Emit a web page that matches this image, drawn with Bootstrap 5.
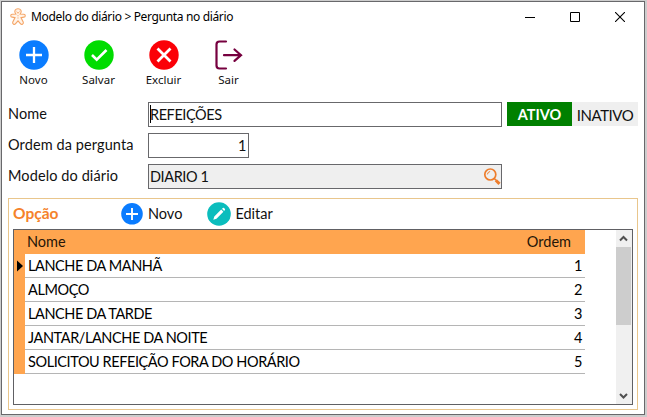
<!DOCTYPE html>
<html lang="pt-BR">
<head>
<meta charset="utf-8">
<meta name="viewport" content="width=device-width, initial-scale=1">
<title>Modelo do diário &gt; Pergunta no diário</title>
<link href="https://cdn.jsdelivr.net/npm/bootstrap@5.3.0/dist/css/bootstrap.min.css" rel="stylesheet">
<style>
body{font-family:Lato,"Open Sans",sans-serif;font-size:14.5px;line-height:20px;color:#111;background:#cdcdcd;padding:1px 2px 2px 1px;height:417px;overflow:hidden}
svg{display:block;flex:none}
.win{height:414px;border:1px solid #68686b;background:#fff}
.titlebar{height:29px;padding-left:8px;font-size:12px;font-family:"Noto Sans","Open Sans",sans-serif;color:#000}
.titlebar .caption-text{margin-left:5px;letter-spacing:-.34px}
.winbtns{margin-right:2px}
.winbtn{width:45px;height:29px}
.tools{height:71px;padding-top:9px;margin-left:-1px}
.tool{width:65px;font-family:"Noto Sans","Open Sans",sans-serif;font-size:11.5px;line-height:16px;color:#111}
.tool span{margin-top:2px}
.frow{height:31px;padding-left:6px}
.flabel{width:140px;padding-top:2px;letter-spacing:.1px}
.field{height:25px;border:1px solid #68686b;padding:0 2px 0 1px;letter-spacing:-.42px}
.lookup{padding-right:0}
.wide{width:354px}.short{width:101px}
.gray{background:#efefef}
.caret{width:1px;height:18px;background:#000;margin-right:-1px;margin-top:-2px}
.toggle{margin-left:5px;height:24px}
.toggle span{margin-top:2px}
.on{width:65px;background:#008000;color:#fff;font-weight:700;font-size:14.5px}
.off{width:66px;background:#efefef;font-size:15px;letter-spacing:-.45px}
.group{margin:3px 6px 0 6px;width:630px;height:212px;border:1px solid #e9c68c;padding:0 4px}
.ghead{height:30px}
.gtitle{width:108px;color:#f5822a;font-weight:700;font-size:15.5px;margin-top:-3px}
.lbl-new{margin-left:5px}
.ico-edit{margin-left:25px}
.gridbox{height:176px;border:1px solid #606064}
.cells{width:571px;color:#000}
.gh{height:24px;background:#ffa54f;padding:0 14px 0 13px;color:#251508}
.ind{width:11px;background:#ffa54f}
.gr{height:24px}
.cell{border-bottom:1px solid #b5b5b5;padding:1px 3px 0;letter-spacing:-.42px}
.sb{width:16px;background:#f0f0f0}
.thumb{height:78px;width:15px;background:#cdcdcd}
</style>
</head>
<body>
<div class="win d-flex flex-column">
  <header class="titlebar d-flex align-items-center">
    <svg width="16" height="18" viewBox="0 0 16 18" fill="#fff4ea" stroke="#f5a566" stroke-width="1.1"><path d="M5.800 6C3.500 3.200 5.400.8 8 .8S12.500 3.200 10.200 6L13.800 6.200c2 .2 1.900 2.700 0 2.900L11 9.600l2.300 4.600c.5 2-1.700 2.900-2.900 1.500L8 12.800l-2.400 2.900c-1.200 1.400-3.400.5-2.900-1.500L5 9.600l-2.800-.5c-1.900-.2-2-2.700 0-2.900z"/><path d="M6.500 3.200h.6M9 3.200h.6M6.900 4.700h2.200M8 7.200v1M8 9.500v1"/></svg>
    <span class="caption-text">Modelo do diário &gt; Pergunta no diário</span>
    <div class="winbtns d-flex ms-auto">
      <div class="winbtn d-flex align-items-center justify-content-center"><svg width="10" height="10"><path d="M0 5.500H10" stroke="#000"/></svg></div>
      <div class="winbtn d-flex align-items-center justify-content-center"><svg width="10" height="10"><path d="M.5.5h9v9h-9z" fill="none" stroke="#000"/></svg></div>
      <div class="winbtn d-flex align-items-center justify-content-center"><svg width="10" height="10"><path d="M0 0l10 10M10 0L0 10" stroke="#000" stroke-width="1.1"/></svg></div>
    </div>
  </header>
  <nav class="tools d-flex">
    <div class="tool d-flex flex-column align-items-center"><svg width="30" height="30" viewBox="0 0 30 30"><circle cx="15" cy="15" r="14.700" fill="#0a7cff"/><path d="M15 7v16M7 15h16" stroke="#fff" stroke-width="2.300"/></svg><span>Novo</span></div>
    <div class="tool d-flex flex-column align-items-center"><svg width="30" height="30" viewBox="0 0 30 30"><circle cx="15" cy="15" r="14.700" fill="#00dc00"/><path d="M8 15l4.700 4.700L22.500 10" fill="none" stroke="#fff" stroke-width="2.600"/></svg><span>Salvar</span></div>
    <div class="tool d-flex flex-column align-items-center"><svg width="30" height="30" viewBox="0 0 30 30"><circle cx="15" cy="15" r="14.700" fill="#fb0007"/><path d="M8.500 8.500l13 13M21.500 8.500l-13 13" stroke="#fff" stroke-width="2.800"/></svg><span>Excluir</span></div>
    <div class="tool d-flex flex-column align-items-center"><svg width="30" height="30" viewBox="0 0 30 30" fill="none" stroke="#76003f" stroke-width="2.200" stroke-linecap="round"><path d="M12 1.500H5.500q-3 0-3 3v21q0 3 3 3H12M10 15.200H27M20.500 9.500l6.500 5.700-6.500 5.700"/></svg><span>Sair</span></div>
  </nav>
  <main>
    <div class="frow d-flex">
      <span class="flabel">Nome</span>
      <div class="field wide d-flex align-items-center"><i class="caret"></i><span>REFEIÇÕES</span></div>
      <div class="toggle d-flex"><div class="on d-flex align-items-center justify-content-center"><span>ATIVO</span></div><div class="off d-flex align-items-center justify-content-center"><span>INATIVO</span></div></div>
    </div>
    <div class="frow d-flex">
      <span class="flabel">Ordem da pergunta</span>
      <div class="field short d-flex align-items-center justify-content-end">1</div>
    </div>
    <div class="frow d-flex">
      <span class="flabel">Modelo do diário</span>
      <div class="field lookup wide gray d-flex align-items-center justify-content-between"><span>DIARIO 1</span><svg width="18" height="18" viewBox="0 0 17 18" fill="none" stroke="#ee7d2c"><circle cx="6.800" cy="6.500" r="5.500" stroke-width="1.700"/><path d="M3.900 6.400q.3-2.500 2.700-2.900" stroke-width="1"/><path d="M10.700 10.400l1.800 1.800" stroke-width="1.500"/><path d="M12.300 12.200l3.700 3.700" stroke-width="3"/></svg></div>
    </div>
    <section class="group">
      <div class="ghead d-flex align-items-center">
        <span class="gtitle">Opção</span>
        <svg width="22" height="22" viewBox="0 0 22 22"><circle cx="11" cy="10.800" r="10.800" fill="#0a7cff"/><path d="M11 5v12M5 11h12" stroke="#fff" stroke-width="1.900"/></svg>
        <span class="lbl-new">Novo</span>
        <svg class="ico-edit" width="24" height="24" viewBox="0 0 24 24"><circle cx="12" cy="12" r="11.800" fill="#0bbdbd"/><path d="M6.300 17.700l1-3.200 6.900-6.900 2.200 2.200-6.900 6.900zM15 6.800l.9-.9q.6-.4 1.200.2l.8.8q.5.600 0 1.200l-.8.8z" fill="#fff"/></svg>
        <span class="ms-1">Editar</span>
      </div>
      <div class="gridbox d-flex justify-content-between">
        <div class="cells">
          <div class="gh d-flex align-items-center justify-content-between"><span>Nome</span><span>Ordem</span></div>
          <div class="gr d-flex"><div class="ind d-flex align-items-center justify-content-center"><svg width="11" height="12"><path d="M3 0.500l6 5.500-6 5.500z"/></svg></div><div class="cell flex-fill d-flex align-items-center justify-content-between"><span>LANCHE DA MANHÃ</span><span>1</span></div></div>
          <div class="gr d-flex"><div class="ind"></div><div class="cell flex-fill d-flex align-items-center justify-content-between"><span>ALMOÇO</span><span>2</span></div></div>
          <div class="gr d-flex"><div class="ind"></div><div class="cell flex-fill d-flex align-items-center justify-content-between"><span>LANCHE DA TARDE</span><span>3</span></div></div>
          <div class="gr d-flex"><div class="ind"></div><div class="cell flex-fill d-flex align-items-center justify-content-between"><span>JANTAR/LANCHE DA NOITE</span><span>4</span></div></div>
          <div class="gr d-flex"><div class="ind"></div><div class="cell flex-fill d-flex align-items-center justify-content-between"><span>SOLICITOU REFEIÇÃO FORA DO HORÁRIO</span><span>5</span></div></div>
        </div>
        <div class="sb d-flex flex-column">
          <svg width="16" height="17"><path d="M4 10.500l3.500-3.500 3.500 3.500" fill="none" stroke="#505050" stroke-width="2"/></svg>
          <div class="thumb"></div>
          <svg class="mt-auto" width="16" height="17"><path d="M4 7l3.500 3.500L11 7" fill="none" stroke="#505050" stroke-width="2"/></svg>
        </div>
      </div>
    </section>
  </main>
</div>
<script src="https://cdn.jsdelivr.net/npm/bootstrap@5.3.0/dist/js/bootstrap.bundle.min.js"></script>
</body>
</html>
